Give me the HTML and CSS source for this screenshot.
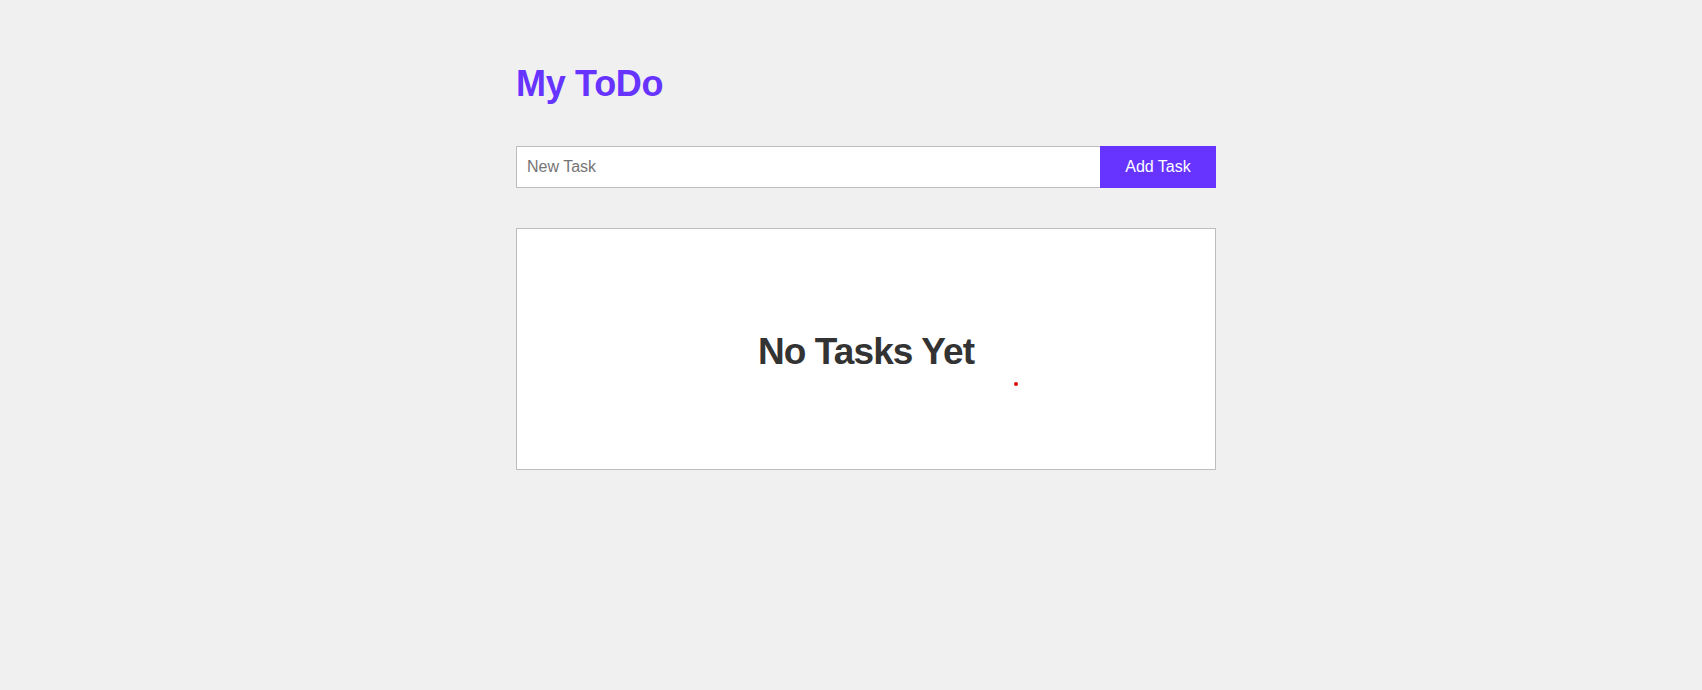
FILE: index.html
```html
<!DOCTYPE html>
<html lang="en">
<head>
<meta charset="utf-8">
<title>My ToDo</title>
<link rel="stylesheet" href="styles.css">
</head>
<body>
<main class="app">
  <h1 class="title">My ToDo</h1>
  <form class="add-form">
    <input class="task-input" type="text" placeholder="New Task">
    <button class="add-btn" type="button">Add Task</button>
  </form>
  <section class="task-list">
    <h2 class="empty">No Tasks Yet</h2>
    <span class="dot"></span>
  </section>
</main>
</body>
</html>
```

FILE: styles.css
```css
html, body {
  margin: 0;
  padding: 0;
  background: #f0f0f0;
  font-family: "Liberation Sans", Arial, sans-serif;
}

.app {
  width: 730px;
  box-sizing: border-box;
  margin: 0 auto;
  padding: 64px 0 0 30px;
}

.title {
  margin: 0 0 42px;
  font-size: 36px;
  line-height: 40px;
  letter-spacing: -0.3px;
  font-weight: 700;
  color: #6633ff;
}

.add-form {
  display: flex;
  height: 42px;
  margin: 0 0 40px;
}

.task-input {
  flex: 1;
  box-sizing: border-box;
  height: 42px;
  margin: 0;
  padding: 0 10px;
  border: 1px solid #bdbdbd;
  border-right: none;
  background: #fff;
  font-family: "Liberation Sans", Arial, sans-serif;
  font-size: 16px;
  color: #333;
  outline: none;
}

.task-input::placeholder {
  color: #757575;
}

.add-btn {
  width: 116px;
  height: 42px;
  margin: 0;
  border: none;
  background: #6633ff;
  color: #fff;
  font-family: "Liberation Sans", Arial, sans-serif;
  font-size: 16px;
  cursor: pointer;
}

.task-list {
  position: relative;
  box-sizing: border-box;
  height: 242px;
  border: 1px solid #bdbdbd;
  background: #fff;
  display: flex;
  align-items: center;
  justify-content: center;
}

.empty {
  margin: 0;
  padding-top: 6px;
  font-size: 37px;
  line-height: 44px;
  letter-spacing: -0.9px;
  font-weight: 700;
  color: #333;
}

.dot {
  position: absolute;
  left: 497px;
  top: 153px;
  width: 4px;
  height: 4px;
  border-radius: 50%;
  background: #e00000;
}
```
